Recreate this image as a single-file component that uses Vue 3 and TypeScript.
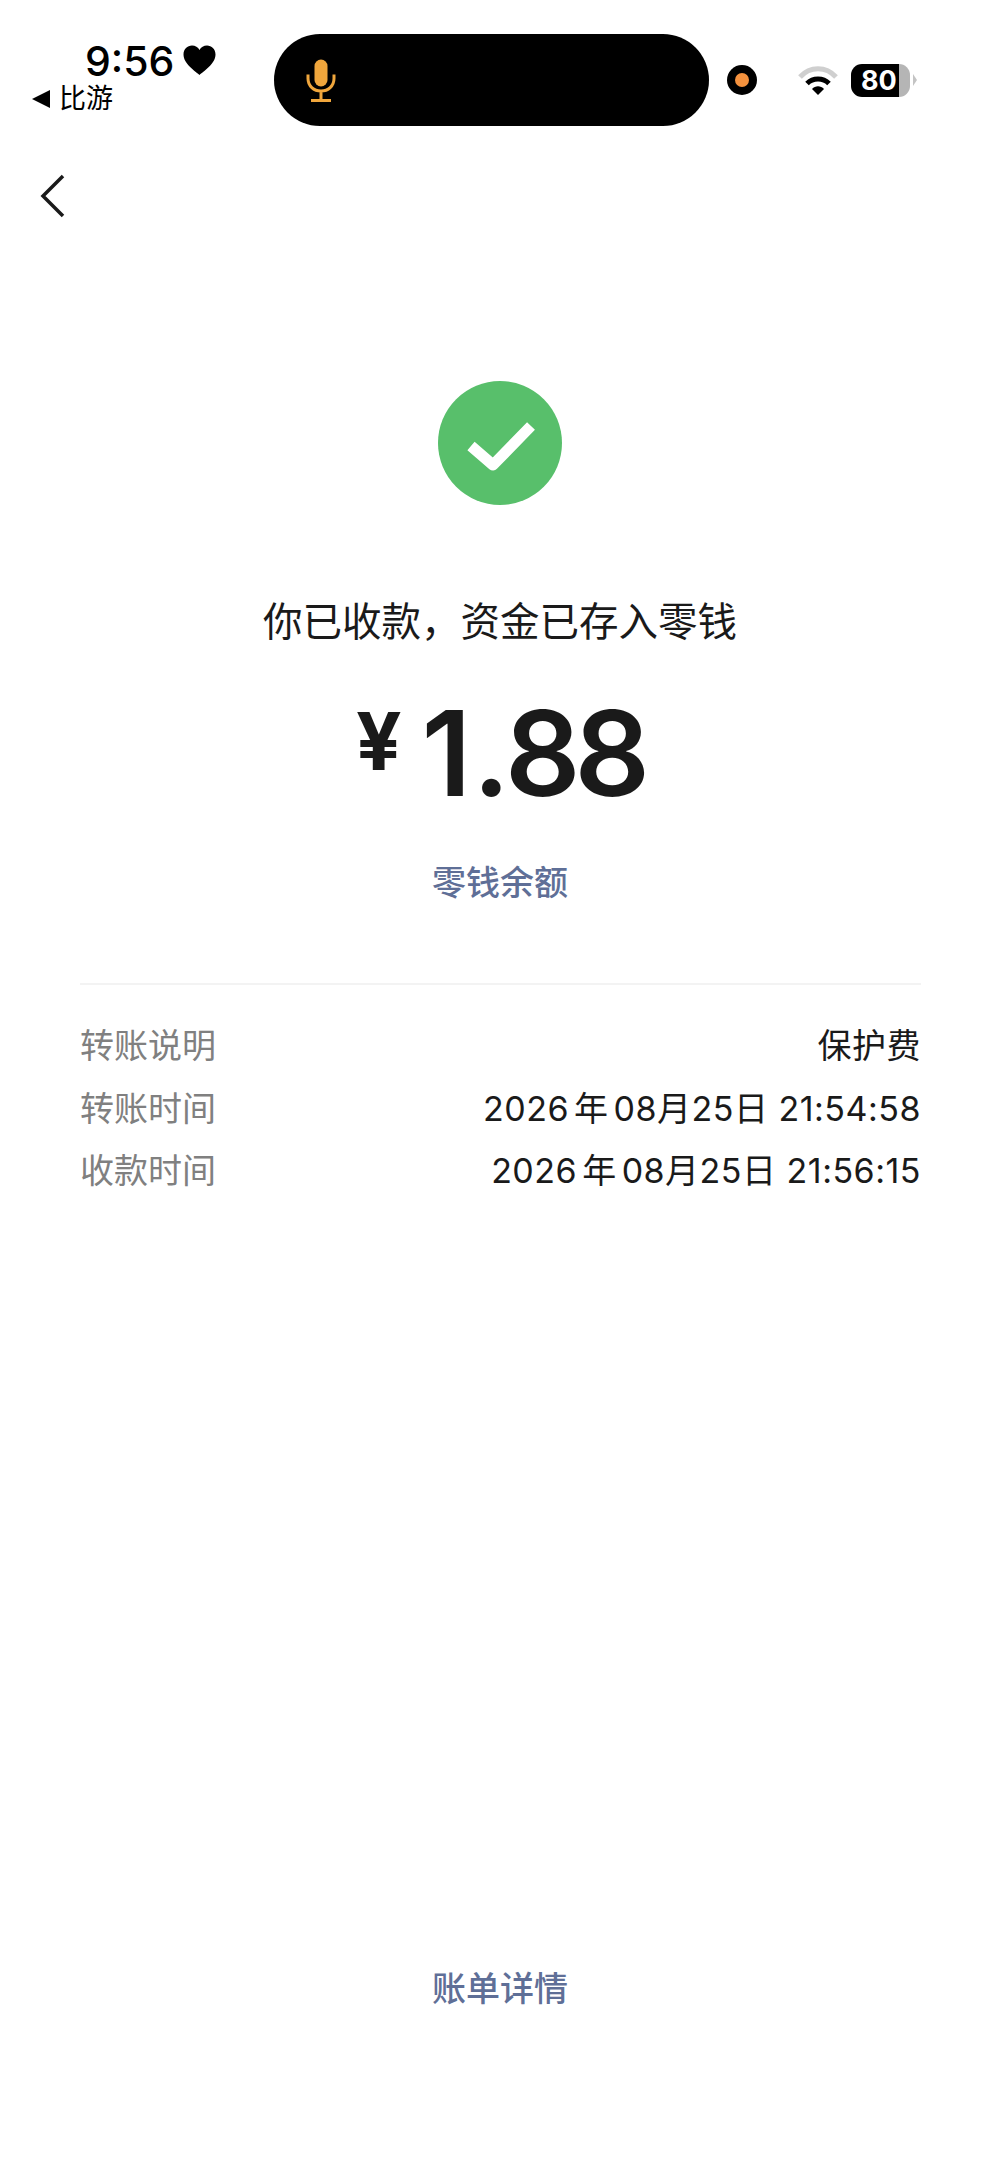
<template>
  <div class="page">
    <div class="status">
      <div class="status-left">
        <div class="time-row">
          <span class="time">9:56</span>
          <svg class="heart" width="33" height="30" viewBox="0 0 33 30">
            <path d="M16.5 30C13 26.6 0.5 19 0.5 9.5 0.5 4 4.4 0.5 9 0.5c3.3 0 6 1.700 7.500 4.500C18 2.200 20.700 0.500 24 0.500 28.600 0.500 32.500 4 32.500 9.500 32.500 19 20 26.600 16.500 30Z" fill="#000" />
          </svg>
        </div>
        <div class="back-app">
          <span class="tri"></span>
          <span>比游</span>
        </div>
      </div>
      <div class="island">
        <svg width="30" height="43" viewBox="0 0 30 43">
          <rect x="8.500" y="0.500" width="13" height="27" rx="6.500" fill="#f0a63c" />
          <path d="M2 15.500v4c0 7.500 5.800 12.500 13 12.500s13-5 13-12.500v-4M15 32v9M5 41.500h20" fill="none" stroke="#f0a63c" stroke-width="3" />
        </svg>
      </div>
      <span class="rec"><span class="rec-dot"></span></span>
      <svg class="wifi" width="40" height="30" viewBox="0 0 40 30">
        <path d="M2 12C12 1 28 1 38 12" fill="none" stroke="#cfcfcf" stroke-width="5" />
        <path d="M9 18.500C15 12.500 25 12.500 31 18.500" fill="none" stroke="#000" stroke-width="5" />
        <path d="M14 24c3.200-3.600 8.800-3.600 12 0l-6 6z" fill="#000" />
      </svg>
      <span class="battery">80</span>
      <span class="nub"></span>
    </div>

    <div class="nav">
      <svg width="26" height="44" viewBox="0 0 26 44">
        <path d="M23 2 3 22l20 20" fill="none" stroke="#1a1a1a" stroke-width="3.500" />
      </svg>
    </div>

    <div class="hero">
      <svg class="ok" width="124" height="124" viewBox="0 0 124 124">
        <circle cx="62" cy="62" r="62" fill="#58bf6b" />
        <path d="M33 65 55 84 93 45" fill="none" stroke="#fff" stroke-width="11" stroke-linejoin="round" />
      </svg>
      <div class="title">你已收款，资金已存入零钱</div>
      <div class="amount">
        <span class="yen">¥</span>
        <span class="num"><span class="one">1</span><span class="dot">.</span>88</span>
      </div>
      <div class="link">零钱余额</div>
    </div>

    <div class="details">
      <div v-for="row in rows" :key="row.label" class="row">
        <span class="label">{{ row.label }}</span>
        <span class="value">
          <template v-if="row.time">
            2026<span class="thin">年</span>08月25日 {{ row.time }}
          </template>
          <template v-else>{{ row.value }}</template>
        </span>
      </div>
    </div>

    <div class="bottom">
      <span class="link">账单详情</span>
    </div>
  </div>
</template>

<script setup lang="ts">
interface Row {
  label: string;
  value?: string;
  time?: string;
}

const rows: Row[] = [
  { label: "转账说明", value: "保护费" },
  { label: "转账时间", time: "21:54:58" },
  { label: "收款时间", time: "21:56:15" },
];
</script>

<style>
html,
body {
  background: #fff;
}
</style>

<style scoped>
.page {
  display: flex;
  flex-direction: column;
  width: 1000px;
  height: 2174px;
  overflow: hidden;
  background: #fff;
  font-family: Inter, "Noto Sans CJK SC", sans-serif;
  color: #1a1a1a;
}

.status {
  display: flex;
  align-items: center;
  height: 92px;
  margin-top: 34px;
  padding-left: 32px;
}

.status-left {
  width: 242px;
  height: 92px;
  color: #000;
}

.time-row {
  display: flex;
  align-items: center;
  gap: 9px;
  height: 46px;
  margin-top: 4px;
  padding-left: 53px;
}

.time {
  font-size: 41px;
  font-weight: 500;
  line-height: 46px;
}

.heart {
  margin-top: -2px;
}

.back-app {
  display: flex;
  align-items: center;
  gap: 9px;
  height: 30px;
  font-size: 27px;
  line-height: 30px;
}

.tri {
  width: 0;
  height: 0;
  border-top: 9px solid transparent;
  border-bottom: 9px solid transparent;
  border-right: 18px solid #000;
}

.island {
  display: flex;
  align-items: center;
  width: 435px;
  height: 92px;
  padding-left: 32px;
  box-sizing: border-box;
  background: #000;
  border-radius: 46px;
}

.rec {
  display: flex;
  align-items: center;
  justify-content: center;
  width: 30px;
  height: 30px;
  margin-left: 18px;
  background: #000;
  border-radius: 50%;
}

.rec-dot {
  width: 14px;
  height: 14px;
  background: #f5923e;
  border-radius: 50%;
}

.wifi {
  margin-left: 41px;
}

.battery {
  width: 59px;
  height: 33px;
  margin-left: 13px;
  padding-left: 10px;
  box-sizing: border-box;
  border-radius: 11px;
  background: linear-gradient(90deg, #000 0 48px, #b5b5b5 48px);
  color: #fff;
  font-size: 27px;
  font-weight: 700;
  line-height: 33px;
}

.nub {
  width: 0;
  height: 0;
  margin-left: 3px;
  border-top: 6px solid transparent;
  border-bottom: 6px solid transparent;
  border-left: 4px solid #c4c4c4;
}

.nav {
  display: flex;
  height: 44px;
  margin-top: 48px;
  padding-left: 40px;
}

.hero {
  display: flex;
  flex-direction: column;
  align-items: center;
  margin-top: 163px;
}

.title {
  margin-top: 92px;
  font-size: 39.500px;
  line-height: 50px;
}

.amount {
  display: flex;
  align-items: baseline;
  margin-top: 46px;
  height: 120px;
}

.yen {
  margin-top: 4px;
  margin-right: 20px;
  align-self: flex-start;
  font-size: 80px;
  font-weight: 700;
  line-height: 88px;
}

.num {
  font-size: 118px;
  font-weight: 600;
  letter-spacing: -6px;
  line-height: 120px;
}

.one {
  letter-spacing: 1px;
}

.dot {
  letter-spacing: -5px;
}

.link {
  color: #5f6f97;
  font-size: 34px;
  font-weight: 500;
  line-height: 44px;
}

.hero .link {
  margin-top: 48px;
}

.details {
  margin: 78px 79px 0 80px;
  padding-top: 30px;
  border-top: 2px solid #f3f3f3;
}

.row {
  display: flex;
  justify-content: space-between;
  height: 62.500px;
  font-size: 34px;
  line-height: 62.500px;
}

.label {
  color: #808080;
}

.value {
  letter-spacing: 0.500px;
}

.thin {
  margin: 0 5px;
}

.bottom {
  display: flex;
  justify-content: center;
  margin-top: auto;
  margin-bottom: 163px;
}
</style>
